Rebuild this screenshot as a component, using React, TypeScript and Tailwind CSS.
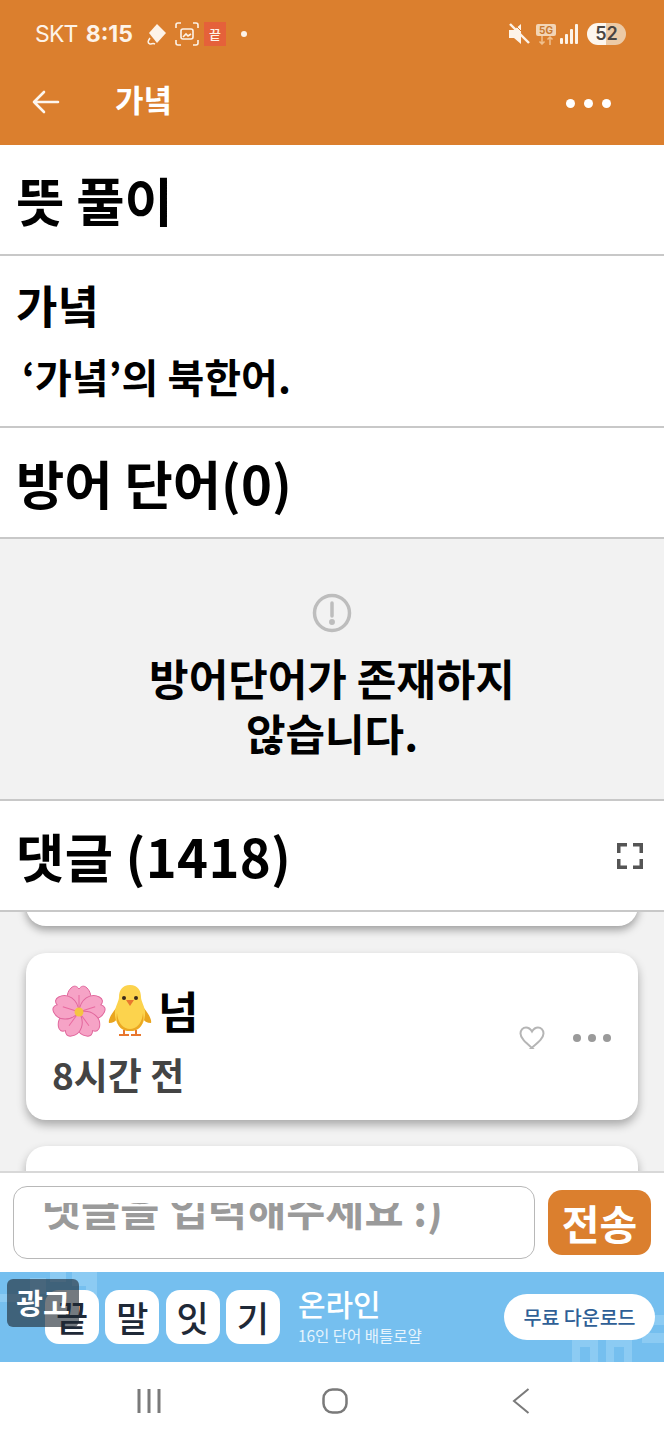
const font = { fontFamily: '"Noto Sans CJK KR", "Noto Sans", sans-serif' }

function Flower() {
  return (
    <svg width="54" height="54" viewBox="0 0 54 54">
      {[0, 72, 144, 216, 288].map((r) => (
        <g key={r} transform={`rotate(${r} 27 28)`}>
          <path d="M27 28C15 23 12 11 19 4c3-3 6-2 8 1 2-3 5-4 8-1 7 7 4 19-8 24z" fill="#f6a3c6" stroke="#e0669c" strokeWidth="1" />
          <path d="M27 25V11" stroke="#e8699f" strokeWidth="1" />
        </g>
      ))}
      <circle cx="27" cy="28" r="4.500" fill="#f4c542" />
    </svg>
  )
}

function Chick() {
  return (
    <svg width="44" height="52" viewBox="0 0 44 52">
      <path d="M9 22C3 29 0 35 1 38c4 0 7-2 9-5zM35 22c6 7 9 13 8 16-4 0-7-2-9-5z" fill="#e9a51f" />
      <path d="M22 0c8 0 11 6 11 12 0 4 3 8 4 14 1 11-5 20-15 20S6 37 7 26c1-6 4-10 4-14C11 6 14 0 22 0z" fill="#fcd34d" />
      <path d="M9 28c1 10 6 16 13 16s12-6 13-16c2 12-4 18-13 18S7 40 9 28z" fill="#eca823" />
      <circle cx="16" cy="13" r="2" fill="#3a2a1a" />
      <circle cx="28" cy="13" r="2" fill="#3a2a1a" />
      <path d="M18 15h8l-4 6z" fill="#e8772e" />
      <path d="M16 45v5M28 45v5M11 50h10M23 50h10" stroke="#e8772e" strokeWidth="2" fill="none" />
    </svg>
  )
}

function SectionTitle({ children }: { children: React.ReactNode }) {
  return <div className="text-[52.5px] leading-none font-bold text-black">{children}</div>
}

function StatusBar() {
  return (
    <div className="h-[60px] pl-[35px] pr-[38px] pt-[12px] flex items-start justify-between text-[#fdf3e8]">
      <div className="flex items-center h-[46px] -mt-[1px]">
        <span className="text-[23px] font-normal tracking-[-0.8px]" style={{ fontFamily: 'Inter, sans-serif' }}>SKT</span>
        <span className="ml-[8px] text-[23px] font-bold" style={{ fontFamily: 'Inter, sans-serif' }}>8:15</span>
        <svg className="ml-[12px]" width="24" height="26" viewBox="0 0 24 26">
          <path d="M12 3l9 9-9 10-8-10z" fill="#fdf3e8" />
          <path d="M5 17c-2 3-3 5 0 6 2 0 3-1 5 0" stroke="#fdf3e8" strokeWidth="1.5" fill="none" />
        </svg>
        <svg className="ml-[6px]" width="24" height="24" viewBox="0 0 24 24" fill="none" stroke="#fdf3e8" strokeWidth="1.6">
          <path d="M1 6V3a2 2 0 0 1 2-2h3M18 1h3a2 2 0 0 1 2 2v3M23 18v3a2 2 0 0 1-2 2h-3M6 23H3a2 2 0 0 1-2-2v-3" />
          <rect x="6" y="7" width="12" height="10" rx="2" />
          <path d="M8 15l3-3 2 2 3-2" />
        </svg>
        <span className="ml-[5px] w-[22px] h-[24px] bg-[#e5613a] text-[13px] leading-[24px] text-center font-medium">끝</span>
        <span className="ml-[15px] w-[6px] h-[6px] rounded-full bg-[#fdf3e8]" />
      </div>
      <div className="flex items-center h-[46px] -mt-[1px]">
        <svg width="22" height="24" viewBox="0 0 22 24">
          <path d="M1 8h5l7-6v20l-7-6H1z" fill="#fdf3e8" />
          <path d="M2 2l19 19" stroke="#fdf3e8" strokeWidth="2.4" />
          <path d="M2 2l19 19" stroke="#db7f2e" strokeWidth="1" transform="translate(2 -2)" />
        </svg>
        <div className="ml-[6px] w-[20px] flex flex-col items-center">
          <span className="w-[20px] h-[12px] rounded-[2px] bg-[#f3d5b5] text-[#c9792f] text-[10px] leading-[12px] text-center font-bold" style={{ fontFamily: 'Inter, sans-serif' }}>5G</span>
          <svg width="16" height="9" viewBox="0 0 16 9" fill="none" stroke="#f0c08e" strokeWidth="1.5">
            <path d="M4 0v8M1.500 5.500L4 8l2.500-2.500M12 9V1M9.500 3.500L12 1l2.500 2.500" />
          </svg>
        </div>
        <svg className="ml-[4px]" width="18" height="20" viewBox="0 0 18 20" fill="#fdf3e8">
          <rect x="0" y="14" width="3" height="6" rx="1" />
          <rect x="5" y="10" width="3" height="10" rx="1" />
          <rect x="10" y="5" width="3" height="15" rx="1" />
          <rect x="15" y="0" width="3" height="20" rx="1" />
        </svg>
        <div className="ml-[9px] w-[39px] h-[22px] rounded-full bg-[linear-gradient(90deg,#fdf6ee_0,#fdf6ee_50%,#eccaa6_50%,#eccaa6_100%)] text-[#4a4542] text-[18px] leading-[22px] text-center font-semibold" style={{ fontFamily: 'Inter, sans-serif' }}>52</div>
      </div>
    </div>
  )
}

export default function App() {
  return (
    <div className="w-[664px] h-[1440px] flex flex-col overflow-hidden bg-white" style={font}>
      {/* Header */}
      <header className="h-[145px] shrink-0 bg-[#db7f2e] flex flex-col">
        <StatusBar />
        <div className="flex items-center h-[85px] pb-[2px] pl-[31px] pr-[53px]">
          <svg width="30" height="26" viewBox="0 0 30 26" fill="none" stroke="#fdf6ee" strokeWidth="2.6" strokeLinecap="round" strokeLinejoin="round">
            <path d="M27 13H3M13 3L3 13l10 10" />
          </svg>
          <span className="ml-[54px] -mt-[6px] text-[31px] font-bold text-white leading-none">가녘</span>
          <div className="ml-auto mt-[4px] flex gap-[9px]">
            <span className="w-[9px] h-[9px] rounded-full bg-white" />
            <span className="w-[9px] h-[9px] rounded-full bg-white" />
            <span className="w-[9px] h-[9px] rounded-full bg-white" />
          </div>
        </div>
      </header>

      {/* 뜻 풀이 */}
      <section className="h-[111px] shrink-0 flex items-center px-[16px] border-b-2 border-[#c8c8c8]">
        <SectionTitle>뜻 풀이</SectionTitle>
      </section>

      <section className="h-[172px] shrink-0 px-[16px] pt-[26px] border-b-2 border-[#c8c8c8]">
        <div className="text-[45px] leading-none font-bold text-black">가녘</div>
        <div className="mt-[29px] ml-[6px] text-[40px] leading-none font-bold text-black">‘가녘’의 북한어.</div>
      </section>

      <section className="h-[111px] shrink-0 flex items-center px-[16px] pb-[1px] border-b-2 border-[#c8c8c8]">
        <SectionTitle>방어 단어(0)</SectionTitle>
      </section>

      {/* 방어단어 없음 */}
      <section className="h-[262px] shrink-0 bg-[#f2f2f2] border-b-2 border-[#c8c8c8] flex flex-col items-center pt-[54px]">
        <svg width="40" height="40" viewBox="0 0 40 40" fill="none" stroke="#bdbdbd" strokeWidth="3.5">
          <circle cx="20" cy="20" r="17.5" />
          <path d="M20 10v13" strokeLinecap="round" />
          <circle cx="20" cy="29" r="1.2" fill="#bdbdbd" />
        </svg>
        <div className="mt-[17px] text-[43px] leading-[55px] font-bold text-black text-center">
          방어단어가 존재하지
          <br />
          않습니다.
        </div>
      </section>

      {/* 댓글 */}
      <section className="h-[111px] shrink-0 flex items-center justify-between pl-[16px] pr-[21px] border-b-2 border-[#c8c8c8]">
        <div className="text-[52.5px] leading-none font-bold text-black tracking-[0.35px]">댓글 (1418)</div>
        <svg width="26" height="26" viewBox="0 0 26 26" fill="none" stroke="#555" strokeWidth="3.5">
          <path d="M1.750 10V1.750H10M16 1.750h8.250V10M24.250 16v8.250H16M10 24.250H1.750V16" />
        </svg>
      </section>

      <section className="flex-1 min-h-0 overflow-hidden bg-[#f2f2f2] px-[26px] relative">
        <div className="-mt-[40px] h-[54px] bg-white rounded-[20px] shadow-[0_4px_8px_rgba(0,0,0,0.35)]" />
        <div className="mt-[27px] h-[167px] bg-white rounded-[20px] shadow-[0_5px_10px_rgba(0,0,0,0.3)] pl-[26px] pr-[27px] flex items-center justify-between">
          <div className="mt-[4px]">
            <div className="flex items-center text-[44px] leading-none font-bold text-black">
              <Flower />
              <span className="ml-[2px]"><Chick /></span>
              <span className="ml-[6px] -mt-[2px]">넘</span>
            </div>
            <div className="mt-[18px] text-[37px] leading-none font-bold text-[#444]">8시간 전</div>
          </div>
          <div className="flex items-center gap-[28px] mt-[3px]">
            <svg width="26" height="24" viewBox="0 0 26 24" fill="none" stroke="#b5b5b5" strokeWidth="2">
              <path d="M13 22C6 16 1.500 12 1.500 7.500 1.500 4 4 1.500 7 1.500c2.500 0 4.500 1.500 6 4 1.500-2.500 3.500-4 6-4 3 0 5.500 2.500 5.500 6 0 4.500-5 8.500-12 14.500z" />
            </svg>
            <div className="flex gap-[7px]">
              <span className="w-[8px] h-[8px] rounded-full bg-[#9a9a9a]" />
              <span className="w-[8px] h-[8px] rounded-full bg-[#9a9a9a]" />
              <span className="w-[8px] h-[8px] rounded-full bg-[#9a9a9a]" />
            </div>
          </div>
        </div>
        <div className="mt-[26px] h-[100px] bg-white rounded-[20px] shadow-[0_5px_10px_rgba(0,0,0,0.3)]" />
      </section>

      {/* 입력 */}
      <div className="h-[101px] shrink-0 bg-white border-t-2 border-[#d8d8d8] flex items-start pl-[13px] pr-[13px] pt-[13px]">
        <div className="w-[522px] h-[73px] border border-[#b8b8b8] rounded-[14px] px-[28px] pt-[16px]">
          <div className="h-[36px] overflow-hidden">
            <div className="-mt-[20px] text-[42.5px] leading-[50px] font-bold text-[#9a9a9a] whitespace-nowrap">댓글을 입력해주세요 :)</div>
          </div>
        </div>
        <div className="ml-[13px] mt-[4px] w-[103px] h-[65px] rounded-[14px] bg-[#db7f2e] text-white text-[41px] font-bold leading-[65px] text-center">전송</div>
      </div>

      {/* 광고 */}
      <div className="h-[90px] shrink-0 bg-[#75bfef] relative flex items-center pl-[45px] pr-[9px] overflow-hidden">
        <svg className="absolute left-0 top-0" width="97" height="60" viewBox="0 0 97 60" fill="#8ccbf3">
          <path d="M0 22h20v8H0zM30 6h16v16H30zM50 0h16v10H50zM72 0h25v40H86V14H72z" />
        </svg>
        <svg className="absolute right-0 bottom-0" width="92" height="47" viewBox="0 0 92 47" fill="#8ccbf3">
          <path d="M0 10h8v37H0zM8 24h10v8H8zM18 10h8v37h-8zM34 10h8v37h-8zM42 24h10v8H42zM52 10h8v37h-8zM70 0h22v10H78v8h14v10H70z" />
        </svg>
        <div className="relative flex gap-[6.3px]">
          {['끝', '말', '잇', '기'].map((c) => (
            <div key={c} className="w-[54px] h-[54px] bg-white rounded-[14px] text-[#1f2937] text-[35px] font-medium leading-[54px] text-center">{c}</div>
          ))}
        </div>
        <div className="relative ml-[18px] text-white -mt-[1px]">
          <div className="text-[30px] leading-[36px] -mt-[3px] font-medium">온라인</div>
          <div className="text-[15.5px] leading-[20px] mt-[4px] text-[#e6f4fd]">16인 단어 배틀로얄</div>
        </div>
        <div className="relative ml-auto w-[151px] h-[46px] rounded-full bg-white text-[#2f5f96] text-[19.5px] font-medium leading-[46px] text-center">무료 다운로드</div>
        <div className="absolute left-[7px] top-[7px] w-[72px] h-[48px] rounded-[6px] bg-[rgba(30,40,50,0.62)] text-white text-[29px] font-bold leading-[46px] text-center">광고</div>
      </div>

      {/* 내비게이션 */}
      <div className="h-[78px] shrink-0 bg-white flex items-center pl-[137px] pr-[134px] justify-between">
        <svg width="24" height="26" viewBox="0 0 24 26" stroke="#7a7a7a" strokeWidth="3"><path d="M2 1v24M12 1v24M22 1v24" /></svg>
        <svg className="mr-[4px]" width="26" height="26" viewBox="0 0 26 26" fill="none" stroke="#7a7a7a" strokeWidth="2.5"><rect x="1.500" y="1.500" width="23" height="23" rx="9" /></svg>
        <svg width="18" height="26" viewBox="0 0 18 26" fill="none" stroke="#7a7a7a" strokeWidth="2"><path d="M16.500 1L2 13l14.500 12" /></svg>
      </div>
    </div>
  )
}
